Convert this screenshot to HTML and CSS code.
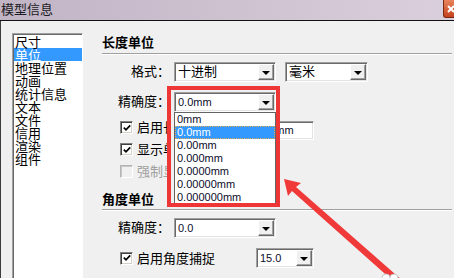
FILE: index.html
```html
<!DOCTYPE html>
<html lang="zh">
<head>
<meta charset="utf-8">
<title>模型信息</title>
<link rel="stylesheet" href="styles.css">
</head>
<body>
<div class="titlebar">
  <span class="title">模型信息</span>
  <span class="close"><svg width="8" height="8" viewBox="0 0 8 8"><path d="M1 1L7 7M7 1L1 7" stroke="#fff" stroke-width="2"/></svg></span>
</div>
<div class="window">
  <ul class="list">
    <li>尺寸</li>
    <li class="sel">单位</li>
    <li>地理位置</li>
    <li>动画</li>
    <li>统计信息</li>
    <li>文本</li>
    <li>文件</li>
    <li>信用</li>
    <li>渲染</li>
    <li>组件</li>
  </ul>
  <div class="panel">
    <div class="heading">长度单位</div>
    <div class="sep"></div>
    <div class="row row-first">
      <span class="lbl">格式：</span>
      <div class="combo w102"><span class="val">十进制</span><span class="btn"></span></div>
      <div class="combo w83 gap"><span class="val">毫米</span><span class="btn"></span></div>
    </div>
    <div class="row row-next">
      <span class="lbl">精确度：</span>
      <div class="combo w102"><span class="val num">0.0mm</span><span class="btn"></span>
        <ul class="dropdown">
          <li>0mm</li>
          <li class="hi">0.0mm</li>
          <li>0.00mm</li>
          <li>0.000mm</li>
          <li>0.0000mm</li>
          <li>0.00000mm</li>
          <li>0.000000mm</li>
        </ul>
      </div>
    </div>
    <div class="check check-1">
      <span class="cb"><svg width="8" height="8" viewBox="0 0 8 8"><polyline points="0.8,3.6 3,5.8 7.2,1.4" fill="none" stroke="#000" stroke-width="1.7"/></svg></span>
      <span class="ctext clip">启用长度捕捉</span>
      <div class="field num"><span class="field-text">0.0mm</span></div>
    </div>
    <div class="check check-2">
      <span class="cb"><svg width="8" height="8" viewBox="0 0 8 8"><polyline points="0.8,3.6 3,5.8 7.2,1.4" fill="none" stroke="#000" stroke-width="1.7"/></svg></span>
      <span class="ctext clip">显示单位格式</span>
    </div>
    <div class="check check-3 disabled">
      <span class="cb"></span>
      <span class="ctext clip">强制显示单位</span>
    </div>
    <div class="heading heading-2">角度单位</div>
    <div class="sep sep-2"></div>
    <div class="row row-angle">
      <span class="lbl">精确度：</span>
      <div class="combo w102"><span class="val num">0.0</span><span class="btn"></span></div>
    </div>
    <div class="check check-4">
      <span class="cb"><svg width="8" height="8" viewBox="0 0 8 8"><polyline points="0.8,3.6 3,5.8 7.2,1.4" fill="none" stroke="#000" stroke-width="1.7"/></svg></span>
      <span class="ctext">启用角度捕捉</span>
      <div class="combo w58"><span class="val num">15.0</span><span class="btn"></span></div>
    </div>
  </div>
</div>
<div class="redbox"></div>
<svg class="arrow" width="454" height="278" viewBox="0 0 454 278">
  <polygon points="284,179 301,183 296,187 403,281 393,281 292,191 288,196" fill="#f03a3a"/>
  <circle cx="386" cy="278" r="4" fill="#fff" stroke="#c8c8c8"/>
  <circle cx="394" cy="278" r="4" fill="#fff" stroke="#c8c8c8"/>
</svg>
</body>
</html>
```
FILE: styles.css
```css
body {
  margin: 0;
  width: 454px;
  height: 278px;
  overflow: hidden;
  position: relative;
  background: #f0f0f0;
  font-family: "Liberation Sans", "Noto Sans CJK SC", sans-serif;
  font-size: 13px;
  color: #000;
}

.titlebar {
  height: 20px;
  border-bottom: 1px solid #111;
  background: linear-gradient(to right, #c1b4c5, #dacfdc);
  display: flex;
  justify-content: space-between;
  overflow: hidden;
}

.title {
  font-family: "Noto Sans CJK SC", sans-serif;
  font-size: 13px;
  line-height: 18px;
  padding-left: 1px;
  color: #1c1c24;
}

.close {
  width: 24px;
  height: 18px;
  margin-right: -13px;
  box-sizing: border-box;
  background: linear-gradient(#e8835c, #c4421d);
  border: 1px solid #7a2a14;
  border-top: none;
  border-radius: 0 0 0 3px;
  display: flex;
  align-items: center;
  padding-left: 3px;
}

.window {
  display: flex;
  height: 257px;
  box-sizing: border-box;
  border-left: 1px solid #3c3c3c;
  overflow: hidden;
}

.list {
  margin: 12px 0 0 11px;
  padding: 1px 0 0 1px;
  list-style: none;
  width: 71px;
  height: 245px;
  box-sizing: border-box;
  background: #fff;
  border: 1px solid;
  border-bottom: none;
  border-color: #a0a0a0 #fff #fff #a0a0a0;
  box-shadow: inset 1px 1px #696969;
  flex: none;
}

.list li {
  height: 13px;
  line-height: 13px;
  padding-left: 1px;
  white-space: nowrap;
  font-family: "Noto Sans CJK SC", sans-serif;
}

.list .sel {
  background: #3399ff;
  color: #fff;
}

.panel {
  flex: 1;
  margin: 0 2px 0 19px;
  display: flex;
  flex-direction: column;
}

.heading {
  margin-top: 14px;
  height: 13px;
  line-height: 13px;
  font-weight: bold;
  font-family: "Noto Sans CJK SC", sans-serif;
}

.sep {
  margin-top: 5px;
  height: 0;
  border-top: 1px solid #a0a0a0;
  border-bottom: 1px solid #fff;
}

.heading-2 { margin-top: 14px; }
.sep-2 { margin-top: 4px; }

.row {
  display: flex;
  align-items: center;
  height: 20px;
}

.row-first { margin-top: 7px; }
.row-next { margin-top: 10px; }
.row-angle { margin-top: 7px; }

.lbl {
  width: 72px;
  flex: none;
  box-sizing: border-box;
  text-align: right;
  padding-right: 4px;
  line-height: 14px;
}

.combo {
  position: relative;
  height: 20px;
  box-sizing: border-box;
  border: 1px solid;
  border-color: #a0a0a0 #fff #fff #a0a0a0;
  box-shadow: inset 1px 1px #696969, inset -1px -1px #e3e3e3;
  background: #fff;
  display: flex;
  align-items: center;
  padding: 0 1px 0 3px;
  flex: none;
}

.w102 { width: 102px; }
.w83 { width: 83px; }
.w58 { width: 58px; }
.gap { margin-left: 9px; }

.val {
  flex: 1;
  line-height: 16px;
  white-space: nowrap;
  overflow: hidden;
}

.num {
  font-size: 11px;
  color: #0c0c2a;
}

.btn {
  width: 16px;
  height: 16px;
  flex: none;
  box-sizing: border-box;
  background: #f0f0f0;
  border: 1px solid;
  border-color: #fff #696969 #696969 #fff;
  box-shadow: inset -1px -1px #a0a0a0;
  display: flex;
  align-items: center;
  justify-content: center;
}

.btn::after {
  content: "";
  display: block;
  width: 0;
  height: 0;
  border-left: 4px solid transparent;
  border-right: 4px solid transparent;
  border-top: 4px solid #000;
  margin: 1px 1px 0 0;
}

.dropdown {
  position: absolute;
  top: 19px;
  left: -1px;
  width: 102px;
  box-sizing: border-box;
  margin: 0;
  padding: 0;
  list-style: none;
  background: #fff;
  border: 1px solid #646464;
  z-index: 5;
}

.dropdown li {
  height: 13px;
  line-height: 13px;
  padding-left: 2px;
  font-size: 11px;
  color: #0c0c2a;
  white-space: nowrap;
}

.dropdown .hi {
  background: #3399ff;
  color: #fff;
  outline: 1px dotted #e0a860;
  outline-offset: -1px;
}

.check {
  display: flex;
  align-items: flex-start;
  padding-left: 18px;
  height: 13px;
}

.check-1 { margin-top: 9px; height: 19px; }
.check-2 { margin-top: 3px; }
.check-3 { margin-top: 9px; }
.check-4 { margin-top: 10px; height: 20px; align-items: center; }

.cb {
  width: 13px;
  height: 13px;
  flex: none;
  box-sizing: border-box;
  border: 1px solid;
  border-color: #808080 #fff #fff #808080;
  box-shadow: inset 1px 1px #404040, inset -1px -1px #d4d0c8;
  background: #fff;
  margin-right: 4px;
  display: flex;
  align-items: center;
  justify-content: center;
}

.ctext {
  width: 119px;
  flex: none;
  line-height: 13px;
  white-space: nowrap;
  overflow: hidden;
}

.ctext.clip {
  width: 31px;
}

.disabled .cb {
  background: #f0f0f0;
  border-color: #b4b4b4 #fff #fff #b4b4b4;
  box-shadow: inset 1px 1px #c8c8c8;
}

.disabled .ctext {
  color: #a0a0a0;
}

.field {
  width: 58px;
  height: 19px;
  margin-left: 88px;
  box-sizing: border-box;
  border: 1px solid;
  border-color: #a0a0a0 #fff #fff #a0a0a0;
  box-shadow: inset 1px 1px #696969, inset -1px -1px #e3e3e3;
  background: #fff;
  padding-left: 3px;
  line-height: 17px;
  white-space: nowrap;
  overflow: hidden;
}

.redbox {
  position: absolute;
  left: 167px;
  top: 86px;
  width: 113px;
  height: 121px;
  box-sizing: border-box;
  border: 4px solid #ef3636;
  z-index: 6;
}

.arrow {
  position: absolute;
  left: 0;
  top: 0;
  z-index: 7;
}
```
